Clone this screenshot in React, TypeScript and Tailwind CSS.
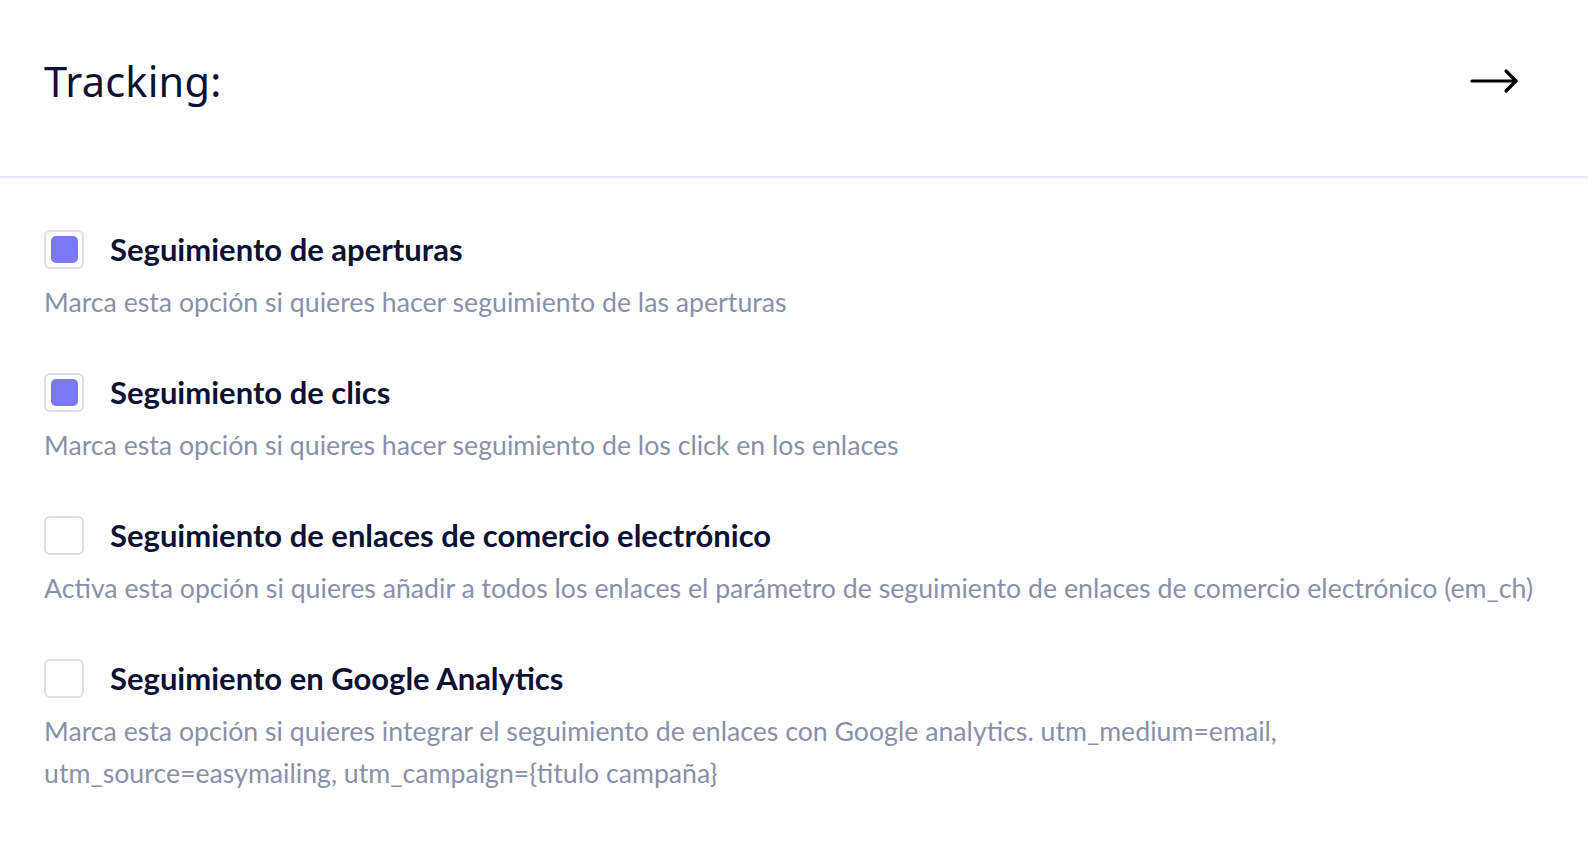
import { useState } from 'react'

interface Option {
  id: string
  label: string
  description: string[]
  checked: boolean
}

const initialOptions: Option[] = [
  {
    id: 'opens',
    label: 'Seguimiento de aperturas',
    description: ['Marca esta opción si quieres hacer seguimiento de las aperturas'],
    checked: true,
  },
  {
    id: 'clicks',
    label: 'Seguimiento de clics',
    description: ['Marca esta opción si quieres hacer seguimiento de los click en los enlaces'],
    checked: true,
  },
  {
    id: 'ecommerce',
    label: 'Seguimiento de enlaces de comercio electrónico',
    description: [
      'Activa esta opción si quieres añadir a todos los enlaces el parámetro de seguimiento de enlaces de comercio electrónico (em_ch)',
    ],
    checked: false,
  },
  {
    id: 'analytics',
    label: 'Seguimiento en Google Analytics',
    description: [
      'Marca esta opción si quieres integrar el seguimiento de enlaces con Google analytics. utm_medium=email,',
      'utm_source=easymailing, utm_campaign={titulo campaña}',
    ],
    checked: false,
  },
]

export default function App() {
  const [options, setOptions] = useState(initialOptions)

  const toggle = (id: string) =>
    setOptions((prev) => prev.map((o) => (o.id === id ? { ...o, checked: !o.checked } : o)))

  return (
    <div className="w-[1588px] h-[866px] bg-white overflow-hidden" style={{ fontFamily: 'Lato, "Noto Sans", sans-serif' }}>
      <header className="h-[178px] border-b-2 border-[#e7e9f5] pl-[44px] pr-[68px] flex items-center justify-between pb-[14px]">
        <h1 className="text-[41.5px] text-[#0b1233] tracking-[0.2px]" style={{ fontFamily: '"Noto Sans", sans-serif' }}>
          Tracking:
        </h1>
        <svg width="50" height="30" viewBox="0 0 50 30" fill="none" stroke="#000" strokeWidth="3.2" strokeLinecap="round" strokeLinejoin="round">
          <path d="M2 15h44" />
          <path d="M36 5l10 10-10 10" />
        </svg>
      </header>

      <div className="pl-[44px] pt-[52px] flex flex-col gap-[50px]">
        {options.map((o) => (
          <div key={o.id}>
            <label className="flex items-center gap-[26px] cursor-pointer" onClick={() => toggle(o.id)}>
              <span className="w-[40px] h-[39px] rounded-[6px] border-2 border-[#dcdfee] flex items-center justify-center shrink-0">
                {o.checked && <span className="w-[27px] h-[27px] rounded-[5px] bg-[#7b78f4]" />}
              </span>
              <span className="text-[31px] font-bold text-[#0b1233] leading-[39px]">{o.label}</span>
            </label>
            <p className="mt-[12px] text-[26.7px] leading-[42px] text-[#8a90aa] whitespace-nowrap">
              {o.description.map((line, i) => (
                <span key={i} className="block">
                  {line}
                </span>
              ))}
            </p>
          </div>
        ))}
      </div>
    </div>
  )
}
